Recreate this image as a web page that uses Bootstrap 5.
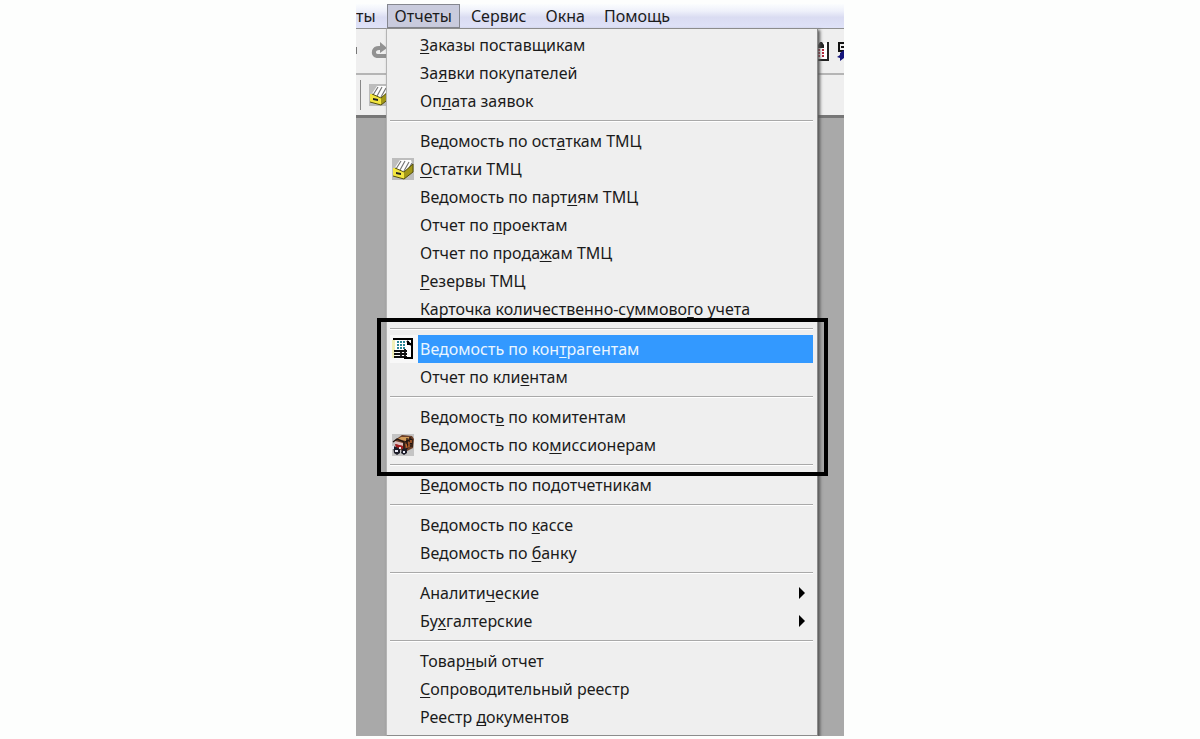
<!DOCTYPE html>
<html lang="ru">
<head>
<meta charset="utf-8">
<meta name="viewport" content="width=device-width, initial-scale=1">
<title>Отчеты</title>
<link href="https://cdn.jsdelivr.net/npm/bootstrap@5.3.0/dist/css/bootstrap.min.css" rel="stylesheet">
<style>
body{background:#fdfefd;font-family:"Noto Sans","Open Sans",sans-serif;font-size:16px;color:#1b1b1b}
.app{max-width:488px;background:#a9a9a9}
.menubar{height:24px;gap:3px;background:linear-gradient(#fbfdfe 0,#eef0fa 30%,#dadcf2 55%,#dfe2f8 100%)}
.menubar button{border:1px solid transparent;background:none;line-height:22px;padding:0 7px;color:#1b1b1b}
.menubar .cut{border-left:0;padding-left:0}
.menubar .open{border-color:#85878f;background:#c9cbdd}
.stack>*{grid-area:1/1;min-width:0}
.bars{background:#efefef;border-top:1px solid #909090;border-bottom:3px solid #777}
.bar-top{height:46px;border-bottom:2px solid #b5b5b5}
.bar-low{height:40px}
.bar-low .rule{width:1px;height:30px;background:#888}
.menu.dropdown-menu{margin:0 26px 0 30px;padding:2px 4px 4px 3px;border:1px solid #8c8c8c;border-left-color:#b4b4b4;border-radius:0;background:#efefef;box-shadow:2px 2px 3px #555;min-width:0;font-size:16px;z-index:auto}
.menu .dropdown-item{height:28px;line-height:28px;padding:0 8px 0 0;color:#1b1b1b}
.menu .dropdown-item:hover{background:#e2e2e2}
.ico{width:28px;height:28px;flex:none;padding:3px 2px}
.ico svg,.bars svg{display:block}
.lbl{flex:1;padding-left:2px;white-space:nowrap}
.menu .active .lbl{background:#3399ff;color:#eaf6ff}
.menu .dropdown-item.active{background:none;padding-right:0}
.menu .active .ico{background:#f8f8f8}
.menu .dropdown-divider{margin:5px 0;height:2px;border:0;background:#a9a9a9;border-bottom:1px solid #fff;opacity:1}
u{text-underline-offset:2px;text-decoration-thickness:1px;text-decoration-skip-ink:none}
.frame{position:absolute;inset:-10px -15px -10px -13px;border:4px solid #000;pointer-events:none}
</style>
</head>
<body>
<svg width="0" height="0" class="position-absolute" aria-hidden="true">
<symbol id="box" viewBox="0 0 22 22"><path fill="#bdbdbd" d="M0 0h22v22H0z"/><path fill="#fff" d="M2 11 8 2h11l2 6-9 8z"/><path d="m4 11 5-8m-1 9 5-9m-1 10 5-9m-1 8 4-7" stroke="#777" stroke-width="1.2"/><path fill="#f3e640" d="M1 10h2l9 4v7L1 18z"/><path fill="#a39818" d="m12 14 9-8v8l-9 7z"/><path d="M1 18l11 3 9-7V6l-9 8-9-4" fill="none" stroke="#55500c"/><path fill="#222" d="m4 14 5 1v2l-5-1z"/></symbol>
<symbol id="sheet" viewBox="0 0 22 22"><path fill="#fff" d="M3 1h14l4 4v16H3z"/><path fill="#f1efb8" d="M0 2h3v18H0z"/><path d="M1 1h20M20 1v20M16 3v3h4M15 3l4 4" fill="none" stroke="#000" stroke-width="2"/><path d="M5 4h9M5 7h9M5 10h9" stroke="#2a8796" stroke-width="2" stroke-dasharray="2 1"/><path d="M2 13h13M2 16h13M2 19h13M9 12v8M13 11v9" stroke="#111" stroke-width="1.8"/><path d="M12 20h8" stroke="#000" stroke-width="2"/></symbol>
<symbol id="cart" viewBox="0 0 22 22"><path fill="#c4c4c4" d="M0 0h22v22H0z"/><path fill="#6b3f28" d="m3 6 7-5 10 1 2 3-1 9-8 4-9-4z"/><path fill="#d09a58" d="m9 3 9 0-4 4-8-2z"/><path fill="#e0c0c0" d="m3 7 8 2v3l-8-2z"/><path fill="#a51b20" d="m3 10 8 2v3l-7-2z"/><path d="m1 8 4-3 7 3v8M13 8l7-3M14 12l6-3M15 4v11M18 3v10M20 5v8" fill="none" stroke="#20140f" stroke-width="1.3"/><path d="m14 10 1 4m2-6v5m2-7v3" stroke="#c2662f" stroke-width="1.3"/><path fill="#1c1c28" d="m1 12 3 1 4 2v4l-3 2-3-2zM10 15l5-1v5l-3 2-3-2z"/><path fill="#e9e9f5" d="M3 16h3v2H3zm8 1h2v2h-2zM0 12h2v3H0zm7 1h2v2H7z"/></symbol>
<symbol id="arrow" viewBox="0 0 6 12"><path d="M0 0v12l6-6z"/></symbol>
</svg>
<main class="app mx-auto mt-1 overflow-hidden">
<nav class="menubar d-flex" aria-label="Главное меню">
<button class="cut">ты</button><button class="open" aria-expanded="true">Отчеты</button><button>Сервис</button><button>Окна</button><button>Помощь</button>
</nav>
<div class="stack d-grid">
<div class="bars align-self-start">
<div class="bar-top d-flex align-items-center justify-content-between">
<svg width="34" height="24" viewBox="0 0 34 24" aria-hidden="true"><path d="M0 8h1v7H0z" fill="#777"/><path d="M32 17H21q-4-1-3-5 1-3 5-3h3" fill="none" stroke="#929292" stroke-width="4"/><path fill="#929292" d="m24 3 7 6-7 5z"/></svg>
<svg width="28" height="24" viewBox="0 0 28 24" aria-hidden="true"><path fill="#fff" d="M0 4h11v17H0z"/><path fill="#222" d="M0 6h2l2-3h2l2 3v3H0zm11-3h2v19H0v-2h11z"/><path d="M3 10v9M7 10v9" stroke="#b3283b" stroke-width="2" stroke-dasharray="2 1"/><path d="M23 3v9h5M23 4h5M25 8h3" fill="none" stroke="#111" stroke-width="2"/><path fill="#15157b" d="m28 11-4 3v2l-3 2 3 1v3l4-3z"/></svg>
</div>
<div class="bar-low d-flex align-items-center gap-2 ps-1"><span class="rule"></span><svg width="22" height="22" aria-hidden="true"><use href="#box"/></svg></div>
</div>
<div class="menu dropdown-menu show position-relative">
<button class="dropdown-item d-flex"><span class="ico"></span><span class="lbl"><u>З</u>аказы поставщикам</span></button>
<button class="dropdown-item d-flex"><span class="ico"></span><span class="lbl">За<u>я</u>вки покупателей</span></button>
<button class="dropdown-item d-flex"><span class="ico"></span><span class="lbl">Оп<u>л</u>ата заявок</span></button>
<hr class="dropdown-divider">
<button class="dropdown-item d-flex"><span class="ico"></span><span class="lbl">Ведомость по ост<u>а</u>ткам ТМЦ</span></button>
<button class="dropdown-item d-flex"><span class="ico"><svg width="22" height="22"><use href="#box"/></svg></span><span class="lbl"><u>О</u>статки ТМЦ</span></button>
<button class="dropdown-item d-flex"><span class="ico"></span><span class="lbl">Ведомость по парт<u>и</u>ям ТМЦ</span></button>
<button class="dropdown-item d-flex"><span class="ico"></span><span class="lbl">Отчет по <u>п</u>роектам</span></button>
<button class="dropdown-item d-flex"><span class="ico"></span><span class="lbl">Отчет по прода<u>ж</u>ам ТМЦ</span></button>
<button class="dropdown-item d-flex"><span class="ico"></span><span class="lbl"><u>Р</u>езервы ТМЦ</span></button>
<button class="dropdown-item d-flex"><span class="ico"></span><span class="lbl">Карточка количественно-суммово<u>г</u>о учета</span></button>
<div class="position-relative">
<hr class="dropdown-divider">
<button class="dropdown-item active d-flex"><span class="ico"><svg width="22" height="22"><use href="#sheet"/></svg></span><span class="lbl">Ведомость по кон<u>т</u>рагентам</span></button>
<button class="dropdown-item d-flex"><span class="ico"></span><span class="lbl">Отчет по кли<u>е</u>нтам</span></button>
<hr class="dropdown-divider">
<button class="dropdown-item d-flex"><span class="ico"></span><span class="lbl">Ведомост<u>ь</u> по комитентам</span></button>
<button class="dropdown-item d-flex"><span class="ico"><svg width="22" height="22"><use href="#cart"/></svg></span><span class="lbl">Ведомость по ко<u>м</u>иссионерам</span></button>
<hr class="dropdown-divider">
<div class="frame"></div>
</div>
<button class="dropdown-item d-flex"><span class="ico"></span><span class="lbl"><u>В</u>едомость по подотчетникам</span></button>
<hr class="dropdown-divider">
<button class="dropdown-item d-flex"><span class="ico"></span><span class="lbl">Ведомость по <u>к</u>ассе</span></button>
<button class="dropdown-item d-flex"><span class="ico"></span><span class="lbl">Ведомость по <u>б</u>анку</span></button>
<hr class="dropdown-divider">
<button class="dropdown-item d-flex align-items-center"><span class="ico"></span><span class="lbl">Аналити<u>ч</u>еские</span><svg width="6" height="12"><use href="#arrow"/></svg></button>
<button class="dropdown-item d-flex align-items-center"><span class="ico"></span><span class="lbl">Бу<u>х</u>галтерские</span><svg width="6" height="12"><use href="#arrow"/></svg></button>
<hr class="dropdown-divider">
<button class="dropdown-item d-flex"><span class="ico"></span><span class="lbl">Товар<u>н</u>ый отчет</span></button>
<button class="dropdown-item d-flex"><span class="ico"></span><span class="lbl"><u>С</u>опроводительный реестр</span></button>
<button class="dropdown-item d-flex"><span class="ico"></span><span class="lbl">Реестр <u>д</u>окументов</span></button>
</div>
</div>
</main>
<script src="https://cdn.jsdelivr.net/npm/bootstrap@5.3.0/dist/js/bootstrap.bundle.min.js"></script>
</body>
</html>
